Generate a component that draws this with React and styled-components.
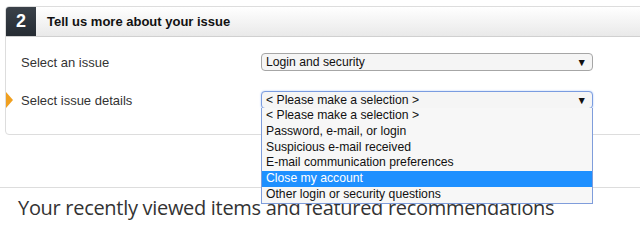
import React from "react";
import styled, { createGlobalStyle } from "styled-components";

const Global = createGlobalStyle`
  html, body {
    margin: 0;
    padding: 0;
    background: #fff;
    overflow: hidden;
  }
  body {
    font-family: "Liberation Sans", Arial, sans-serif;
    color: #333;
  }
`;

const Page = styled.div`
  width: 640px;
  height: 234px;
  position: relative;
  overflow: hidden;
`;

const Panel = styled.section`
  margin: 6px -20px 0 5px;
  height: 129px;
  box-sizing: border-box;
  border: 1px solid #ddd;
  border-radius: 4px;
`;

const Header = styled.div`
  display: flex;
  align-items: center;
  height: 29px;
  border-bottom: 1px solid #d0d0d0;
  background: linear-gradient(#fff, #e9e9e9);
  border-radius: 4px 4px 0 0;
`;

const Step = styled.div`
  width: 30px;
  height: 29px;
  display: flex;
  align-items: center;
  justify-content: center;
  background: linear-gradient(#3a4149, #262c33);
  color: #fff;
  font-weight: bold;
  font-size: 18px;
  border-radius: 3px 0 0 0;
`;

const Title = styled.h3`
  margin: 0 0 0 11px;
  font-size: 13px;
  font-weight: bold;
  color: #111;
`;

const Body = styled.div`
  padding: 16px 0 0 0;
`;

const Row = styled.div`
  position: relative;
  display: grid;
  grid-template-columns: 255px 332px;
  align-items: center;
  height: 17px;
  margin-bottom: ${p => p.gap || 0}px;
`;

const Label = styled.div`
  padding-left: 15px;
  font-size: 13px;
  color: #333;
`;

const Marker = styled.span`
  position: absolute;
  left: 0;
  top: 1px;
  width: 0;
  height: 0;
  border-top: 8px solid transparent;
  border-bottom: 8px solid transparent;
  border-left: 7px solid #f0a020;
`;

const SelectBox = styled.div`
  position: relative;
  box-sizing: border-box;
  height: 18px;
  display: flex;
  align-items: center;
  justify-content: space-between;
  padding: 0 5px 0 4px;
  font-size: 12.2px;
  color: #111;
  background: #f5f5f5;
  border: 1px solid ${p => (p.focus ? "#7a9ce0" : "#a6a6a6")};
  border-radius: 4px;
  box-shadow: ${p => (p.focus ? "0 0 2px #a9c4f5" : "none")};
`;

const Arrow = styled.span`
  font-size: 10.5px;
  color: #111;
`;

const Menu = styled.ul`
  position: absolute;
  left: 255px;
  top: 17px;
  width: 332px;
  box-sizing: border-box;
  margin: 0;
  padding: 0;
  list-style: none;
  background: #f7f7f7;
  border: 1px solid #7f9ddb;
  border-top: none;
  z-index: 2;
`;

const Option = styled.li`
  height: 15.8px;
  line-height: 15.8px;
  padding-left: 4px;
  font-size: 12.2px;
  color: ${p => (p.active ? "#fff" : "#111")};
  background: ${p => (p.active ? "#1e90ff" : "transparent")};
`;

const Recent = styled.div`
  margin-top: 52px;
  border-top: 1px solid #ddd;
  padding: 6px 0 0 18px;
`;

const RecentTitle = styled.h2`
  margin: 0;
  font-family: "Open Sans", "Liberation Sans", sans-serif;
  font-weight: 400;
  font-size: 20px;
  letter-spacing: -0.3px;
  color: #333;
`;

const options = [
  "< Please make a selection >",
  "Password, e-mail, or login",
  "Suspicious e-mail received",
  "E-mail communication preferences",
  "Close my account",
  "Other login or security questions",
];

export default function App() {
  return (
    <Page>
      <Global />
      <Panel>
        <Header>
          <Step>2</Step>
          <Title>Tell us more about your issue</Title>
        </Header>
        <Body>
          <Row gap={21}>
            <Label>Select an issue</Label>
            <SelectBox>
              <span>Login and security</span>
              <Arrow>▼</Arrow>
            </SelectBox>
          </Row>
          <Row>
            <Marker />
            <Label>Select issue details</Label>
            <SelectBox focus>
              <span>&lt; Please make a selection &gt;</span>
              <Arrow>▼</Arrow>
            </SelectBox>
            <Menu>
              {options.map((o, i) => (
                <Option key={i} active={o === "Close my account"}>
                  {o}
                </Option>
              ))}
            </Menu>
          </Row>
        </Body>
      </Panel>
      <Recent>
        <RecentTitle>Your recently viewed items and featured recommendations</RecentTitle>
      </Recent>
    </Page>
  );
}
